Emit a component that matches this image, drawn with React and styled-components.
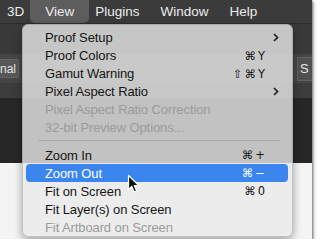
import React from 'react'
import styled, { createGlobalStyle } from 'styled-components'

const GlobalStyle = createGlobalStyle`
  html, body {
    margin: 0;
    padding: 0;
    background: #ffffff;
  }
  body {
    font-family: "Liberation Sans", Arial, sans-serif;
  }
`

const topMenus = ['3D', 'View', 'Plugins', 'Window', 'Help']

const viewItems = [
  { label: 'Proof Setup', submenu: true },
  { label: 'Proof Colors', keys: '⌘Y' },
  { label: 'Gamut Warning', keys: '⇧⌘Y' },
  { label: 'Pixel Aspect Ratio', submenu: true },
  { label: 'Pixel Aspect Ratio Correction', disabled: true },
  { label: '32-bit Preview Options...', disabled: true },
  { separator: true },
  { label: 'Zoom In', keys: '⌘+' },
  { label: 'Zoom Out', keys: '⌘−', active: true },
  { label: 'Fit on Screen', keys: '⌘0' },
  { label: 'Fit Layer(s) on Screen' },
  { label: 'Fit Artboard on Screen', disabled: true }
]

export default function App () {
  return (
    <>
      <GlobalStyle />
      <Frame>
        <MenuBar>
          {topMenus.map(name => (
            <MenuTitle key={name} open={name === 'View'}>{name}</MenuTitle>
          ))}
        </MenuBar>
        <TitleStrip />
        <OptionsBar>
          <Dropdown>nal</Dropdown>
          <SideField>S</SideField>
        </OptionsBar>
        <TabStrip />
        <Workspace />
        <Canvas />

        <Menu>
          {viewItems.map((item, i) =>
            item.separator
              ? <Separator key={i} />
              : (
                <Item key={i} active={item.active} disabled={item.disabled}>
                  <span>{item.label}</span>
                  {item.keys && <Keys>{item.keys}</Keys>}
                  {item.submenu && (
                    <Chevron width='6' height='9' viewBox='0 0 6 9'>
                      <path d='M1 1 L4.5 4.5 L1 8' fill='none' stroke='#222' strokeWidth='1.7' />
                    </Chevron>
                  )}
                </Item>
                )
          )}
        </Menu>

        <Cursor width='14' height='20' viewBox='0 0 14 20'>
          <path
            d='M1.5 1.5 L1.5 15.5 L4.8 12.4 L7.2 18 L9.6 17 L7.3 11.5 L11.8 11.5 Z'
            fill='#111'
            stroke='#fff'
            strokeWidth='1.2'
            strokeLinejoin='round'
          />
        </Cursor>
      </Frame>
    </>
  )
}

const Frame = styled.div`
  position: relative;
  width: 312px;
  height: 239px;
  overflow: hidden;
  display: flex;
  flex-direction: column;
  box-shadow: 1px 1px 2px rgba(0, 0, 0, 0.45), 2px 2px 4px rgba(0, 0, 0, 0.2);
`

const MenuBar = styled.div`
  flex: 0 0 23px;
  display: flex;
  align-items: stretch;
  gap: 21px;
  padding-left: 7px;
  background: #3b3b3b;
`

const MenuTitle = styled.div`
  display: flex;
  align-items: center;
  padding: 0 ${p => (p.open ? '15px' : '0')} 1px;
  margin: 0 ${p => (p.open ? '-15px' : '0')};
  border-radius: 0 0 5px 5px;
  background: ${p => (p.open ? '#5d5d5d' : 'transparent')};
  color: #ececec;
  font-size: 13.5px;
`

const TitleStrip = styled.div`
  flex: 0 0 30px;
  background: #393939;
  border-top: 1px solid #2e2e2e;
`

const OptionsBar = styled.div`
  flex: 0 0 29px;
  display: flex;
  align-items: center;
  justify-content: space-between;
  background: #464646;
`

const Dropdown = styled.div`
  width: 20px;
  height: 19px;
  margin-left: -1px;
  display: flex;
  align-items: center;
  justify-content: flex-end;
  padding-right: 2px;
  box-sizing: border-box;
  background: #575757;
  border: 1px solid #666;
  border-left: none;
  border-radius: 0 2px 2px 0;
  color: #e6e6e6;
  font-size: 12px;
`

const SideField = styled.div`
  width: 30px;
  height: 24px;
  margin-right: -15px;
  display: flex;
  align-items: center;
  padding-left: 2px;
  box-sizing: border-box;
  background: #505050;
  border: 1px solid #626262;
  color: #e6e6e6;
  font-size: 13px;
`

const TabStrip = styled.div`
  flex: 0 0 15px;
  background: #3c3c3c;
`

const Workspace = styled.div`
  flex: 0 0 65px;
  background: #272727;
`

const Canvas = styled.div`
  flex: 1;
  background: #f4f4f4;
`

const Menu = styled.div`
  position: absolute;
  left: 22px;
  top: 24px;
  width: 271px;
  height: 213px;
  box-sizing: border-box;
  padding: 4px 4px 0 3px;
  display: flex;
  flex-direction: column;
  background: rgba(234, 234, 234, 0.8);
  border: 1px solid rgba(120, 120, 120, 0.35);
  border-radius: 6px;
  box-shadow: 0 3px 8px rgba(0, 0, 0, 0.35);
`

const Item = styled.div`
  height: 18px;
  display: flex;
  align-items: center;
  padding: 0 9px 0 19px;
  border-radius: 4px;
  font-size: 13px;
  letter-spacing: -0.1px;
  white-space: nowrap;
  color: ${p => (p.active ? '#ffffff' : p.disabled ? '#9a9a9a' : '#151515')};
  background: ${p => (p.active ? '#3a86ee' : 'transparent')};

  & > span:first-child {
    flex: 1;
  }
`

const Keys = styled.span`
  font-family: "DejaVu Sans", sans-serif;
  font-size: 11.5px;
  letter-spacing: 2px;
  margin-right: 12px;
`

const Chevron = styled.svg`
  display: block;
`

const Separator = styled.div`
  height: 1px;
  margin: 4px 8px 5px 12px;
  background: rgba(0, 0, 0, 0.12);
`

const Cursor = styled.svg`
  position: absolute;
  left: 127px;
  top: 174px;
`
